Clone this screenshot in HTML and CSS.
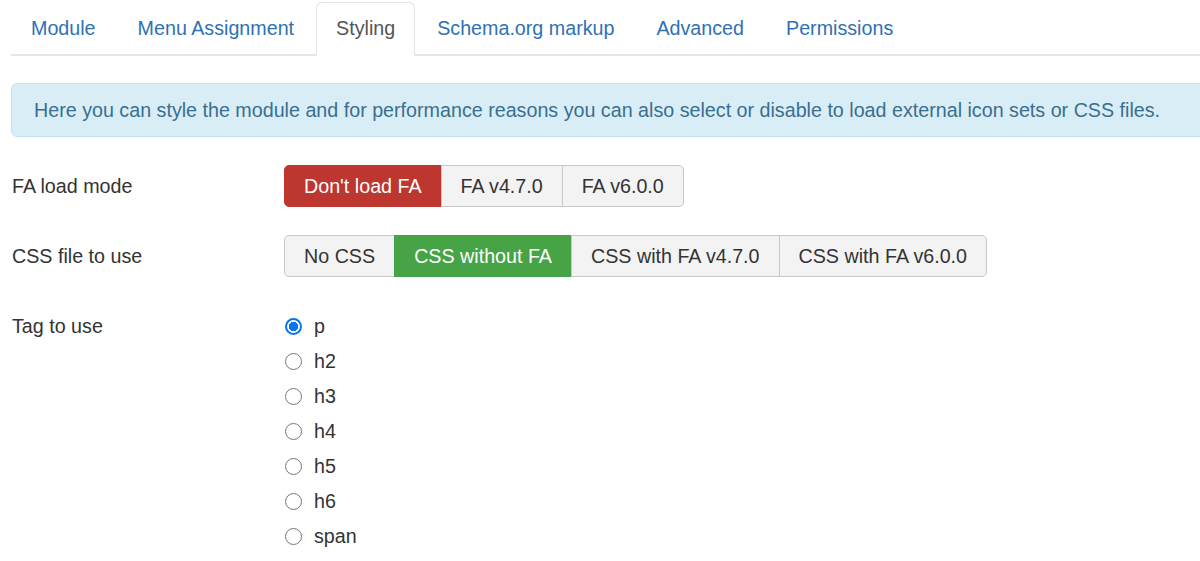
FILE: index.html
```html
<!DOCTYPE html>
<html>
<head>
    <title>Module - Styling</title>
    <link rel="stylesheet" href="styles.css">
</head>
<body>
    <div class="container">
        <ul class="nav-tabs">
            <li><a href="#">Module</a></li>
            <li><a href="#">Menu Assignment</a></li>
            <li class="active"><a href="#">Styling</a></li>
            <li><a href="#">Schema.org markup</a></li>
            <li><a href="#">Advanced</a></li>
            <li><a href="#">Permissions</a></li>
        </ul>

        <div class="alert-info">
            Here you can style the module and for performance reasons you can also select or disable to load external icon sets or CSS files.
        </div>

        <div class="control-group">
            <label class="control-label">FA load mode</label>
            <div class="btn-group">
                <button class="btn btn-danger">Don't load FA</button>
                <button class="btn">FA v4.7.0</button>
                <button class="btn">FA v6.0.0</button>
            </div>
        </div>

        <div class="control-group">
            <label class="control-label">CSS file to use</label>
            <div class="btn-group">
                <button class="btn">No CSS</button>
                <button class="btn btn-success">CSS without FA</button>
                <button class="btn">CSS with FA v4.7.0</button>
                <button class="btn">CSS with FA v6.0.0</button>
            </div>
        </div>

        <div class="control-group">
            <label class="control-label">Tag to use</label>
            <div class="radio-list">
                <label class="radio"><input type="radio" name="tag" value="p" checked> p</label>
                <label class="radio"><input type="radio" name="tag" value="h2"> h2</label>
                <label class="radio"><input type="radio" name="tag" value="h3"> h3</label>
                <label class="radio"><input type="radio" name="tag" value="h4"> h4</label>
                <label class="radio"><input type="radio" name="tag" value="h5"> h5</label>
                <label class="radio"><input type="radio" name="tag" value="h6"> h6</label>
                <label class="radio"><input type="radio" name="tag" value="span"> span</label>
            </div>
        </div>
    </div>
</body>
</html>
```
FILE: styles.css
```css
body {
    margin: 0;
    font-family: "Liberation Sans", Arial, sans-serif;
    font-size: 19.7px;
    color: #333;
    background-color: #fff;
    overflow: hidden;
}

.container {
    width: 1200px;
    padding-left: 11px;
    padding-top: 2px;
}

.nav-tabs {
    display: flex;
    list-style: none;
    margin: 0 0 27px 0;
    padding: 0;
    border-bottom: 2px solid #e5e5e5;
}

.nav-tabs li {
    margin-right: 2px;
    margin-bottom: -2px;
}

.nav-tabs a {
    display: block;
    padding: 10px 19px 11px 19px;
    line-height: 30px;
    color: #3071b4;
    text-decoration: none;
    border: 1px solid transparent;
    border-radius: 6px 6px 0 0;
}

.nav-tabs .active a {
    color: #555;
    background-color: #fff;
    border-color: #e3e3e3 #e3e3e3 transparent;
    border-bottom: 2px solid #fff;
}

.alert-info {
    padding: 11px 22px 11px 22px;
    line-height: 30px;
    color: #3a6f8f;
    background-color: #d9edf7;
    border: 1px solid #c2e5f1;
    border-radius: 6px;
    margin-bottom: 28px;
    white-space: nowrap;
}

.control-group {
    display: flex;
    margin-bottom: 28px;
}

.control-label {
    display: block;
    width: 272px;
    padding-left: 1px;
    line-height: 42px;
}

.btn-group {
    display: flex;
}

.btn {
    font-family: inherit;
    font-size: 19.7px;
    color: #333;
    height: 42px;
    padding: 0 19px;
    background-color: #f3f3f3;
    border: 1px solid #c8c8c8;
    margin-left: -1px;
    cursor: pointer;
}

.btn:first-child {
    margin-left: 0;
    border-radius: 5px 0 0 5px;
}

.btn:last-child {
    border-radius: 0 5px 5px 0;
}

.btn-danger {
    color: #fff;
    background-color: #bd362f;
    border-color: #bd362f;
}

.btn-success {
    color: #fff;
    background-color: #46a447;
    border-color: #46a447;
}

.radio-list {
    display: flex;
    flex-direction: column;
    padding-top: 4px;
}

.radio {
    display: flex;
    align-items: center;
    height: 35px;
    line-height: 35px;
}

/* drawn by hand so the circles come out the same size everywhere */
.radio input {
    appearance: none;
    box-sizing: border-box;
    width: 17px;
    height: 17px;
    margin: 0 12px 0 1px;
    border: 1.5px solid #777;
    border-radius: 50%;
    background-color: #fff;
}

.radio input:checked {
    border: 2px solid #0b75f0;
    background: radial-gradient(circle, #0b75f0 0, #0b75f0 4.5px, #fff 5px);
}
```
